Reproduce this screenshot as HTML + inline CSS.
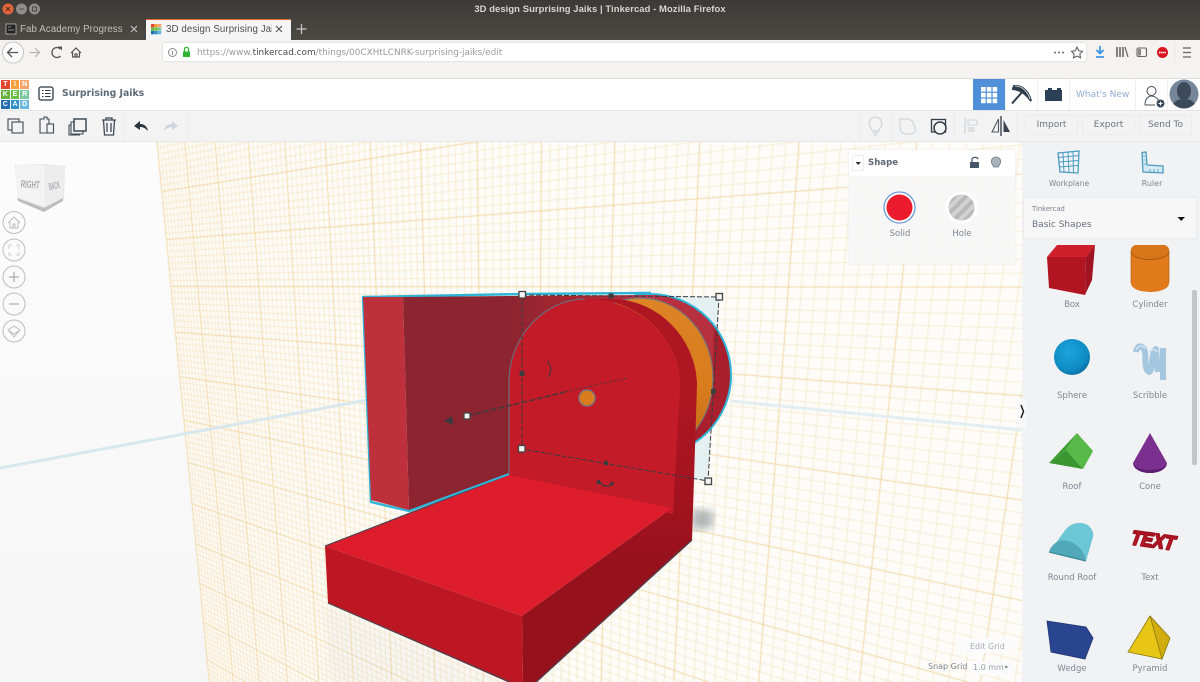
<!DOCTYPE html>
<html><head><meta charset="utf-8"><title>3D design Surprising Jaiks | Tinkercad</title>
<style>
html,body{margin:0;padding:0;width:1200px;height:682px;overflow:hidden;background:#fafafa;font-family:"DejaVu Sans","Liberation Sans",sans-serif}
.a{position:absolute}
.t{position:absolute;white-space:nowrap;line-height:12px}
.c{transform:translateX(-50%);font-size:8.5px;color:#7d8793}
svg{position:absolute;overflow:visible}
.btn{position:absolute;top:115px;width:53px;height:20px;background:#f3f3f3;border:1px solid #ebebeb;box-sizing:border-box;text-align:center;font-size:9px;line-height:19px;color:#6b7480}
</style></head><body>
<div class="a" style="left:0;top:142px;width:1022px;height:540px;background:linear-gradient(#fcfcfc,#f6f6f6)"></div>
<canvas id="g" width="1200" height="682" class="a" style="left:0;top:0"></canvas>
<script>
(function(){var c=document.getElementById('g').getContext('2d');
function P(u,v){var t=-0.0436*u,s=0.0134*v,w=1+t+s;return[(157-439*t+520*s)/w,(142+286*t+3880*s)/w]}
var U=15,V=14,i,p,q,mi='rgba(241,205,140,.44)',ma='rgba(236,195,115,.8)';
c.beginPath();p=[P(0,0),P(U,0),P(U,V),P(0,V)];c.moveTo(p[0][0],p[0][1]);for(i=1;i<4;i++)c.lineTo(p[i][0],p[i][1]);c.closePath();c.fillStyle='#fdfcf9';c.fill();
c.lineWidth=.8;
for(i=0;i<=U*8;i++){p=P(i/8,0);q=P(i/8,V);c.strokeStyle=i%8?mi:ma;c.beginPath();c.moveTo(p[0],p[1]);c.lineTo(q[0],q[1]);c.stroke()}
for(i=0;i<=V*8;i++){p=P(0,i/8);q=P(U,i/8);c.strokeStyle=i%8?mi:ma;c.beginPath();c.moveTo(p[0],p[1]);c.lineTo(q[0],q[1]);c.stroke()}
})();
</script>

<!-- 3D scene -->
<svg width="1200" height="682" style="left:0;top:0">
<defs>
<filter id="bs"><feGaussianBlur stdDeviation="4"/></filter>
<linearGradient id="bk" x1="0" y1="0" x2="1" y2="0"><stop offset="0" stop-color="#8d2530"/><stop offset=".45" stop-color="#a9262f"/><stop offset=".8" stop-color="#b62c3c"/><stop offset="1" stop-color="#c5394c"/></linearGradient>
<linearGradient id="or" x1="0" y1="0" x2="0" y2="1"><stop offset="0" stop-color="#dd8426"/><stop offset=".55" stop-color="#d97c1d"/><stop offset="1" stop-color="#c16c14"/></linearGradient>
<linearGradient id="rf" gradientUnits="userSpaceOnUse" x1="0" y1="400" x2="0" y2="570"><stop offset="0" stop-color="#ae1622"/><stop offset=".6" stop-color="#a2131f"/><stop offset="1" stop-color="#95111c"/></linearGradient>
<radialGradient id="sph" cx=".42" cy=".36" r=".7"><stop offset="0" stop-color="#1ba6dc"/><stop offset=".7" stop-color="#0f8cc4"/><stop offset="1" stop-color="#0b6a9e"/></radialGradient>
<pattern id="hs" width="8" height="8" patternUnits="userSpaceOnUse" patternTransform="rotate(-45)"><rect width="8" height="8" fill="#b9b9b9"/><rect width="8" height="4" fill="#d2d2d2"/></pattern>
</defs>
<path d="M0 468L370 399.500" stroke="#d8e8ee" stroke-width="3" fill="none"/>
<path d="M730 401L1022 430" stroke="#e2eef2" stroke-width="3" fill="none"/>
<path d="M692 508L714 512L712 528L692 530Z" fill="#6d7880" filter="url(#bs)" opacity=".5"/>
<path d="M324 606L510 684L330 684Z" fill="#cfcfcf" filter="url(#bs)" opacity=".12"/>
<!-- selection tint -->
<path d="M660 295L719 297L708 481L692 478L692 440L735 380Z" fill="#dfeef1" opacity=".85"/>
<!-- back cylinder -->
<ellipse cx="650" cy="375" rx="81" ry="81" fill="#a8202d" stroke="#2fb4d8" stroke-width="2"/>
<path d="M650 295A80 80 0 0 1 714 328L712 380L600 340Z" fill="#b6303f"/>
<!-- left wall -->
<path d="M363 297L522 294L650 293L660 450L509 474L409 511L371 502Z" fill="none" stroke="#2fb4d8" stroke-width="2.400" stroke-linejoin="round"/>
<path d="M363 297L403 297L409 510L371 500Z" fill="#bf303d"/>
<path d="M403 297L512 296L512 474L409 510Z" fill="#8d2530"/>
<path d="M509 296L655 295L655 340L560 400L509 400Z" fill="url(#bk)"/>
<!-- orange -->
<ellipse cx="640" cy="378" rx="73" ry="80" fill="url(#or)" stroke="#77757a" stroke-width="1.200"/>
<!-- arch side + right face -->
<path d="M590 299L615 299C665 302 697 345 697 385L692 540L535 684L523 684L522 616L672 508L680 385C680 340 640 300 590 299Z" fill="url(#rf)"/>
<!-- arch front -->
<path d="M509 480L509 378C511 335 545 299 585 299C640 299 680 340 680 385L673 514Z" fill="#c31b28"/>
<path d="M509 473L509 378C511 335 545 299 585 299" fill="none" stroke="#6e6a78" stroke-width="1.200"/>
<!-- base -->
<path d="M508 475L325 546L522 616L672 508Z" fill="#dd1c2c"/>
<path d="M325 546L522 616L523 684L512 684L328 603Z" fill="#bd1723"/>
<path d="M328 603L512 683M692 540L535 683M325 546L508 475" stroke="#4b4450" stroke-width="1.200" fill="none"/>
<path d="M409 511L509 474" stroke="#2fb4d8" stroke-width="2" fill="none"/>
<!-- gizmo -->
<g fill="none" stroke="#3b3b3f">
<path d="M522 295L719 297L708 481L522 449Z" stroke-width="1" stroke-dasharray="5 2"/>
<path d="M467 416L565 392" stroke-width="1.400" stroke-dasharray="6 2"/>
<path d="M565 392L627 378" stroke-width=".8" stroke-dasharray="3 2"/>
<path d="M547 361C552 366 552 372 548 377" stroke-width="1"/>
<path d="M599 480C602 488 610 488 613 482" stroke-width="1.200"/>
</g>
<path d="M444 421L452 416L453 425Z" fill="#3b3b3f"/>
<path d="M598 479L601 484L596 484ZM613 481L614 486L609 484Z" fill="#3b3b3f"/>
<circle cx="587" cy="398" r="8" fill="#d97c1d" stroke="#787880" stroke-width="1.400"/>
<g fill="#f4f4f4" stroke="#444" stroke-width="1.300">
<rect x="519" y="291.500" width="6.500" height="6.500"/><rect x="716" y="293.500" width="6.500" height="6.500"/><rect x="705" y="478" width="6.500" height="6.500"/><rect x="518.500" y="445.500" width="6.500" height="6.500"/><rect x="464" y="413" width="6" height="6"/>
</g>
<g fill="#3d3d3d"><rect x="608.500" y="293.500" width="5" height="5"/><rect x="711" y="389" width="5" height="5"/><rect x="519.500" y="371" width="5" height="5"/><circle cx="606" cy="463" r="2.500"/></g>

<!-- view cube -->
<path d="M15 165L45 164L65 166L64 199L44 211L18 200Z" fill="#e8e8e8"/>
<path d="M16 165L45 165L45 207L17 197Z" fill="#f3f3f3"/>
<path d="M46 165L64 166L63 197L46 207Z" fill="#ededed"/>
<path d="M17 198L44 208L63 198L63 201L44 212L18 201Z" fill="#bcbcbc"/>
<g fill="none" stroke="#bdbdbd" stroke-width="1">
<circle cx="14" cy="222.500" r="11"/><circle cx="14" cy="250" r="11"/><circle cx="14" cy="277" r="11"/><circle cx="14" cy="304" r="11"/><circle cx="14" cy="331" r="11"/>
<path d="M8 223L14 217L20 223M10 222V228H18V222M13 228V224H15V228"/>
<path d="M9 249V245H12M16 245H19V249M19 252V255H16M12 255H9V252" stroke="#cfcfcf"/>
<path d="M14 272V282M9 277H19" stroke="#999"/><path d="M9 304H19" stroke="#999"/>
<path d="M8 330L14 326L20 330L14 337ZM8 330L14 334L20 330"/>
</g>
<text x="30" y="188" transform="rotate(4 30 188)" font-family="Liberation Sans,sans-serif" font-size="10.500" font-weight="bold" fill="#a9a9ac" text-anchor="middle" textLength="19" lengthAdjust="spacingAndGlyphs">RIGHT</text>
<text x="55" y="189" transform="rotate(-12 55 189)" font-family="Liberation Sans,sans-serif" font-size="10" font-weight="bold" fill="#a9a9ac" text-anchor="middle" textLength="11" lengthAdjust="spacingAndGlyphs">BACK</text>
</svg>

<!-- shape panel -->
<div class="a" style="left:849px;top:150px;width:166px;height:114px;background:rgba(247,247,247,.94);box-shadow:0 0 2px #e6e6e6"></div>
<div class="a" style="left:849px;top:150px;width:166px;height:26px;background:#fff"></div>
<div class="a" style="left:852px;top:155px;width:12px;height:16px;border:1px solid #eee;border-radius:2px;box-sizing:border-box"></div>
<div class="t" style="left:868px;top:157px;font-size:8.600px;font-weight:bold;color:#5e6874">Shape</div>
<div class="t c" style="left:900px;top:228px">Solid</div>
<div class="t c" style="left:962px;top:228px">Hole</div>
<svg width="1200" height="682" style="left:0;top:0">
<path d="M855.500 162H861L858.200 165Z" fill="#333"/>
<path d="M970 162V168H979V162Z" fill="#47586b"/>
<path d="M972 162V159.500C972 157 977 156.500 978 159" fill="none" stroke="#47586b" stroke-width="1.300"/>
<path d="M996 157A4.500 4.500 0 0 0 992.500 164.500L993.500 167H998.500L999.500 164.500A4.500 4.500 0 0 0 996 157Z" fill="#a7b2bc" stroke="#6e7c89" stroke-width=".8"/>
<circle cx="899.500" cy="207.500" r="15.500" fill="#fff" stroke="#6b9bd6" stroke-width="1.300"/><circle cx="899.500" cy="207.500" r="13" fill="#ec1c2e"/>
<circle cx="961.500" cy="207.500" r="16" fill="#fff"/><circle cx="961.500" cy="207.500" r="13" fill="url(#hs)"/>
</svg>

<!-- right panel -->
<div class="a" style="left:1022px;top:142px;width:178px;height:540px;background:#f1f2f4"></div>
<div class="a" style="left:1024px;top:198px;width:172px;height:40px;background:#f7f7f8;box-shadow:0 0 2px #ddd"></div>
<div class="t c" style="left:1069px;top:178px;font-size:7.600px">Workplane</div>
<div class="t c" style="left:1152px;top:178px;font-size:8px">Ruler</div>
<div class="t" style="left:1032px;top:203px;font-size:6.800px;color:#77818c">Tinkercad</div>
<div class="t" style="left:1032px;top:219px;font-size:9px;color:#66707c">Basic Shapes</div>
<div class="t c" style="left:1072px;top:299px">Box</div>
<div class="t c" style="left:1150px;top:299px">Cylinder</div>
<div class="t c" style="left:1072px;top:390px">Sphere</div>
<div class="t c" style="left:1150px;top:390px">Scribble</div>
<div class="t c" style="left:1072px;top:481px">Roof</div>
<div class="t c" style="left:1150px;top:481px">Cone</div>
<div class="t c" style="left:1072px;top:572px">Round Roof</div>
<div class="t c" style="left:1150px;top:572px">Text</div>
<div class="t c" style="left:1072px;top:663px">Wedge</div>
<div class="t c" style="left:1150px;top:663px">Pyramid</div>
<div class="a" style="left:1192px;top:290px;width:5px;height:175px;background:#c4c5c7;border-radius:2px"></div>
<div class="a" style="left:1017px;top:398px;width:9px;height:30px;background:#f8f8f8"></div>
<div class="a" style="left:957px;top:638px;width:57px;height:15px;background:#fbfbfb"></div>
<div class="a" style="left:969px;top:661px;width:45px;height:14px;background:#fbfbfb"></div>
<div class="t" style="left:970px;top:641px;font-size:8px;color:#a5acb3">Edit Grid</div>
<div class="t" style="left:928px;top:661px;font-size:8px;color:#7b8490">Snap Grid</div>
<div class="t" style="left:973px;top:662px;font-size:8px;color:#9aa1a9">1.0 mm</div>
<svg width="1200" height="682" style="left:0;top:0">
<defs><clipPath id="pc"><rect x="1022" y="245" width="178" height="437"/></clipPath></defs>
<path d="M1021 405L1023.500 411.500L1021 418" fill="none" stroke="#222" stroke-width="1.500"/>
<path d="M1004.500 667.500H1008L1006.200 665.500Z" fill="#555"/>
<path d="M1177.500 217H1185L1181.200 221Z" fill="#111"/>
<g fill="none" stroke="#4a9cc0" stroke-width="1"><path d="M1058 153L1079 151L1078 173L1060 172Z" stroke-width="1.300"/><path d="M1058.500 157.500L1079 155.500M1059 162L1078.500 160.500M1059 167L1078 165.500M1063 152.500L1064 172.500M1068 152L1069 173M1073 151.500L1073.500 173"/></g>
<path d="M1142 152.500L1146 152L1147 165L1163 166L1163 173L1143 172Z" fill="#d7eaf3" stroke="#4a9cc0" stroke-width="1.300"/>
<path d="M1143 156H1145M1143.500 160H1145.500M1144 164H1146M1150 172V169M1154 172V169M1158 172V169" stroke="#4a9cc0" stroke-width=".8"/>
<g clip-path="url(#pc)">
<path d="M1047 257L1057 245H1095L1086 257Z" fill="#cf1f2b"/>
<path d="M1047 257L1086 257L1085 295L1049 288Z" fill="#b11522"/>
<path d="M1086 257L1095 245L1092 280L1085 295Z" fill="#a01320"/>
<path d="M1131 250C1131 240 1169 240 1169 250V283C1169 295 1131 295 1131 283Z" fill="#e07a1a"/>
<path d="M1131 250C1131 240 1169 240 1169 250V252C1166 262 1134 262 1131 252Z" fill="#d87518"/>
<path d="M1131 252C1134 262 1166 262 1169 252" fill="none" stroke="#a85c10" stroke-width="1"/>
<path d="M1131 283V250M1169 250V283" stroke="#a85c10" stroke-width=".6" fill="none"/>
</g>
<circle cx="1072" cy="357" r="18" fill="url(#sph)"/>
<path d="M1136 352C1137 345 1143 344 1145 352C1146 360 1144 368 1149 372C1153 372 1151 352 1156 349L1158 372M1163 348L1163 380" fill="none" stroke="#a4c6de" stroke-width="6" stroke-linejoin="round"/>
<path d="M1136 350C1139 345 1143 344 1145 349M1150 352C1152 349 1156 349 1158 352" fill="none" stroke="#c7dded" stroke-width="2"/>
<path d="M1077 433L1049 463L1066 450Z" fill="#3e9f33"/>
<path d="M1077 433L1093 451L1083 469L1066 450Z" fill="#57b948"/>
<path d="M1049 463L1066 450L1083 469Z" fill="#3a9630"/>
<path d="M1150 433L1133 463A17 10 0 0 0 1167 463Z" fill="#7b2f8f"/>
<path d="M1133 463A17 10 0 0 0 1167 463A17 7 0 0 1 1133 463Z" fill="#5c1f70"/>
<path d="M1049 552L1066 529C1072 522 1083 521 1089 526C1093 530 1094 534 1093 537L1086 561Z" fill="#6cc6d5"/>
<path d="M1049 552C1052 542 1062 539 1068 541C1078 544 1085 552 1086 561Z" fill="#50a8b8"/>
<path d="M1049 552L1086 561" stroke="#3b8a9a" stroke-width="1.200"/>
<text x="0" y="0" transform="translate(1151 547) rotate(8) skewX(-12)" font-family="Liberation Sans,sans-serif" font-size="20" font-weight="bold" fill="#cf1f2e" stroke="#a11220" stroke-width="2" stroke-linejoin="round" text-anchor="middle" textLength="44" lengthAdjust="spacingAndGlyphs">TEXT</text>
<path d="M1047 621L1086 627L1093 638L1085 659L1051 652Z" fill="#2a4590" stroke="#1f3472" stroke-width=".8"/>
<path d="M1150 616L1128 652L1162 659L1170 638Z" fill="#e8c617" stroke="#8a7a10" stroke-width=".8"/>
<path d="M1150 616L1162 659L1170 638Z" fill="#d2ad10" stroke="#8a7a10" stroke-width=".8"/>
</svg>

<!-- browser chrome -->
<div class="a" style="left:0;top:0;width:1200px;height:40px;background:linear-gradient(#3b3a36,#4c4a44)"></div>
<div class="t" style="left:0;width:1200px;top:3px;text-align:center;font:bold 9.400px/12px 'Liberation Sans',sans-serif;color:#d9d7d2;letter-spacing:.1px">3D design Surprising Jaiks | Tinkercad - Mozilla Firefox</div>
<div class="a" style="left:146px;top:19px;width:145px;height:21px;background:#f5f5f5;border-top:1px solid #e2683a;box-sizing:border-box"></div>
<div class="t" style="left:20px;top:24px;font:9.700px/12px 'Liberation Sans',sans-serif;letter-spacing:.1px;color:#c2c0bb;width:105px;overflow:hidden">Fab Academy Progress D</div>
<div class="t" style="left:166px;top:24px;font:9.700px/12px 'Liberation Sans',sans-serif;letter-spacing:.1px;color:#4e4e4e;width:106px;overflow:hidden">3D design Surprising Jaik</div>
<div class="a" style="left:0;top:40px;width:1200px;height:38px;background:#f4f3f2;border-bottom:1px solid #dfdedd;box-sizing:content-box"></div>
<div class="a" style="left:163px;top:43px;width:923px;height:18px;background:#fff;border-radius:2px;box-shadow:0 0 2px #cfcfcf"></div>
<div class="t" style="left:197px;top:47px;font-size:8.900px;color:#9a9a9a">https://www.<span style="color:#4a4a4a">tinkercad.com</span>/things/00CXHtLCNRK-surprising-jaiks/edit</div>
<!-- page header -->
<div class="a" style="left:0;top:79px;width:1200px;height:31px;background:#fff;border-bottom:1px solid #e6e6e6"></div>
<div class="a" style="left:0;top:111px;width:1200px;height:30px;background:#f3f3f3;border-bottom:1px solid #e8e8e8"></div>
<div class="t" style="left:62px;top:88px;font-size:9.300px;font-weight:bold;color:#5d6a78">Surprising Jaiks</div>
<div class="a" style="left:973px;top:79px;width:32px;height:31px;background:#4f90d9"></div>
<div class="t" style="left:1076px;top:89px;font-size:9px;color:#8fabd6">What's New</div>
<div class="btn" style="left:1025px">Import</div><div class="btn" style="left:1082px">Export</div><div class="btn" style="left:1139px">Send To</div>
<div class="a" style="left:1px;top:80px;width:28px;height:29px;display:grid;grid-template-columns:repeat(3,1fr);grid-template-rows:repeat(3,1fr);gap:1px;font:bold 7px/9px 'Liberation Sans',sans-serif;color:#fff;text-align:center">
<span style="background:#e2472f">T</span><span style="background:#f2a13c">I</span><span style="background:#f5a56c">N</span>
<span style="background:#69b23f">K</span><span style="background:#6cc04a">E</span><span style="background:#7cc9a0">R</span>
<span style="background:#1f6fb2">C</span><span style="background:#2f8ec8">A</span><span style="background:#6ab8e0">D</span></div>
<svg width="1200" height="682" style="left:0;top:0">
<circle cx="8" cy="9" r="5.500" fill="#e0663a"/><path d="M6 7L10 11M10 7L6 11" stroke="#5b2a18" stroke-width="1"/>
<circle cx="21.500" cy="9" r="5.500" fill="#8f8d88"/><circle cx="34.500" cy="9" r="5.500" fill="#8f8d88"/>
<path d="M19.500 9H23.500" stroke="#4a4843"/><rect x="32.500" y="7" width="4" height="4" fill="none" stroke="#4a4843"/>
<rect x="6" y="24" width="10" height="10" fill="#222" stroke="#bbb" stroke-width=".8"/><path d="M8 27H11M8 30H14" stroke="#bbb" stroke-width=".8"/>
<path d="M131 26L137 32M137 26L131 32" stroke="#c8c6c2" stroke-width="1.100"/>
<path d="M276 26L282 32M282 26L276 32" stroke="#555" stroke-width="1.100"/>
<path d="M301.500 24V34M296.500 29H306.500" stroke="#c8c6c2" stroke-width="1.300"/>
<g><rect x="151" y="24" width="3.300" height="3.300" fill="#e2472f"/><rect x="154.500" y="24" width="3.300" height="3.300" fill="#f2a13c"/><rect x="158" y="24" width="3.300" height="3.300" fill="#f5a56c"/><rect x="151" y="27.500" width="3.300" height="3.300" fill="#69b23f"/><rect x="154.500" y="27.500" width="3.300" height="3.300" fill="#6cc04a"/><rect x="158" y="27.500" width="3.300" height="3.300" fill="#7cc9a0"/><rect x="151" y="31" width="3.300" height="3.300" fill="#1f6fb2"/><rect x="154.500" y="31" width="3.300" height="3.300" fill="#2f8ec8"/><rect x="158" y="31" width="3.300" height="3.300" fill="#6ab8e0"/></g>
<circle cx="13" cy="52.500" r="10.500" fill="#fbfbfb" stroke="#c4c4c4"/>
<path d="M18 52.500H8M12 48L7.500 52.500L12 57" fill="none" stroke="#555" stroke-width="1.300"/>
<path d="M39 52.500H29.500M35 48L39.500 52.500L35 57" fill="none" stroke="#b5b5b5" stroke-width="1.200"/>
<path d="M60.500 49A5 5 0 1 0 60.500 56" fill="none" stroke="#555" stroke-width="1.300"/><path d="M58 46.500L62 46.500L62 50.500Z" fill="#555"/>
<path d="M71 53L76 48L81 53M72.500 52V57H79.500V52M75 57V54H77V57" fill="none" stroke="#555" stroke-width="1.200"/>
<circle cx="172.500" cy="52.500" r="4" fill="none" stroke="#888"/><path d="M172.500 51V55" stroke="#888"/>
<path d="M183 51.500H190V57H183Z" fill="#2fb52f"/><path d="M184.500 51.500V49.500C184.500 46.500 188.500 46.500 188.500 49.500V51.500" fill="none" stroke="#2fb52f" stroke-width="1.300"/>
<g fill="#666"><circle cx="1055" cy="52.500" r="1"/><circle cx="1059" cy="52.500" r="1"/><circle cx="1063" cy="52.500" r="1"/></g>
<path d="M1077 47L1078.800 50.800L1082.500 51.300L1079.800 54L1080.500 57.800L1077 56L1073.500 57.800L1074.200 54L1071.500 51.300L1075.200 50.800Z" fill="none" stroke="#555" stroke-width="1"/>
<path d="M1100 46V53M1096.500 50L1100 53.500L1103.500 50" fill="none" stroke="#2f8fe0" stroke-width="1.600"/><path d="M1096 57H1104" stroke="#2f8fe0" stroke-width="1.600"/>
<path d="M1117 47V57M1120 47V57M1123 47V57" stroke="#666" stroke-width="1.600"/><path d="M1125 47L1128 57" stroke="#666" stroke-width="1.300"/>
<rect x="1137" y="48" width="9.500" height="8.500" rx="1.500" fill="none" stroke="#666" stroke-width="1.100"/><rect x="1138" y="49" width="3" height="6.500" fill="#888"/>
<circle cx="1162.500" cy="52.500" r="5.500" fill="#d8141f"/><path d="M1159 52.500H1166" stroke="#fff" stroke-width="1.500" stroke-dasharray="1.500 .5"/>
<path d="M1183 48H1191M1183 52.500H1191M1183 57H1191" stroke="#666" stroke-width="1.300"/>
<path d="M1175 42V62" stroke="#e4e4e4"/>
<rect x="39" y="87" width="14" height="13" rx="2" fill="none" stroke="#2f3a45" stroke-width="1.300"/><path d="M42 90.500H43.500M45 90.500H50.500M42 93.500H43.500M45 93.500H50.500M42 96.500H43.500M45 96.500H50.500" stroke="#2f3a45" stroke-width="1.100"/>
<g fill="#fff"><rect x="981" y="87" width="4.600" height="4.600"/><rect x="986.800" y="87" width="4.600" height="4.600"/><rect x="992.600" y="87" width="4.600" height="4.600"/><rect x="981" y="92.800" width="4.600" height="4.600"/><rect x="986.800" y="92.800" width="4.600" height="4.600"/><rect x="992.600" y="92.800" width="4.600" height="4.600"/><rect x="981" y="98.600" width="4.600" height="4.600"/><rect x="986.800" y="98.600" width="4.600" height="4.600"/><rect x="992.600" y="98.600" width="4.600" height="4.600"/></g>
<path d="M1014 86C1020 85 1028 89 1031 101C1026 94 1021 90 1013 89ZM1024 90L1012 103.500" fill="#2f3d4b" stroke="#2f3d4b" stroke-width="2"/>
<path d="M1015 86C1021 86 1027 90 1030 99" fill="none" stroke="#f5f5f5" stroke-width=".8"/>
<path d="M1045 90H1048V88H1052V90H1057V88H1061V90H1062V101H1045Z" fill="#2b3f57"/>
<path d="M1005.500 79V110M1037.500 79V110M1069.500 79V110M1135.500 79V110M1167.500 79V110" stroke="#f0f0f0"/>
<circle cx="1151.500" cy="91" r="4.500" fill="none" stroke="#444d57" stroke-width="1"/>
<path d="M1145 105C1145 98 1149 96 1151.500 96C1154 96 1158 98 1158.500 101M1145 105H1155" fill="none" stroke="#444d57" stroke-width="1"/>
<circle cx="1160.500" cy="103.500" r="4" fill="#3b4a5a"/><path d="M1158.500 103.500H1162.500M1160.500 101.500V105.500" stroke="#fff"/>
<defs><clipPath id="av"><circle cx="1184" cy="94" r="14.500"/></clipPath></defs>
<circle cx="1184" cy="94" r="14.500" fill="#76869a"/>
<g clip-path="url(#av)"><ellipse cx="1184" cy="91" rx="7" ry="9" fill="#3c4a5c"/><path d="M1172 110C1172 101 1178 99 1184 99C1190 99 1196 101 1196 110Z" fill="#3c4a5c"/></g>
<g fill="none" stroke="#3f4a55" stroke-width="1.100">
<rect x="8" y="119" width="11" height="11"/><rect x="12" y="122" width="11" height="11" fill="#f3f3f3"/>
<path d="M42 119H40V133H53V126M42 119H44V117H47V119H49V124"/><rect x="47" y="124" width="6.500" height="9" fill="#f3f3f3"/>
<rect x="74" y="119" width="12" height="12" stroke-width="1.500"/><path d="M74 122H71V134H83V131M71 125H69V135H80" />
<path d="M102 120H116M106 120V118H112V120M103.500 120L104.500 135H113.500L114.500 120M107 123V132M111 123V132" stroke-width="1.300"/>
</g>
<path d="M134 126L140 121V124C144 124 147 126 148 131C145 128 143 127 140 127V130Z" fill="#2b3640"/>
<path d="M178 126L172 121V124C168 124 165 126 164 131C167 128 169 127 172 127V130Z" fill="#cdd6e0"/>
<path d="M124.500 111V141M187.500 111V141M859.500 111V141M891.500 111V141M954.500 111V141M1017.500 111V141" stroke="#ebebeb"/>
<path d="M875.500 117A6.500 6.500 0 0 0 871 128L872.500 131H878.500L880 128A6.500 6.500 0 0 0 875.500 117ZM873 133H878M874 135H877" fill="none" stroke="#cfd5da" stroke-width="1.200"/>
<path d="M900 119H909C913 121 913 122 914 125C916 128 916 132 912 134H905C901 133 900 130 900 127Z" fill="none" stroke="#d2d6da" stroke-width="1.200"/>
<rect x="931.500" y="119.500" width="14" height="12.500" fill="none" stroke="#333d47" stroke-width="1.300"/>
<circle cx="940" cy="128" r="6" fill="#f3f3f3" stroke="#333d47" stroke-width="1.500"/>
<path d="M965 118V134" stroke="#d2d6da" stroke-width="1.300"/><rect x="968" y="120" width="9" height="5" fill="none" stroke="#d2d6da"/><rect x="968" y="127" width="6.500" height="5" fill="#dfe2e5"/>
<path d="M1001 116V136" stroke="#2f3a45" stroke-width="1.300"/>
<path d="M998.500 119V132H992Z" fill="none" stroke="#4d5863" stroke-width="1.100"/>
<path d="M1003.500 120V132H1010Z" fill="#3a4550"/>
</svg>
</body></html>
